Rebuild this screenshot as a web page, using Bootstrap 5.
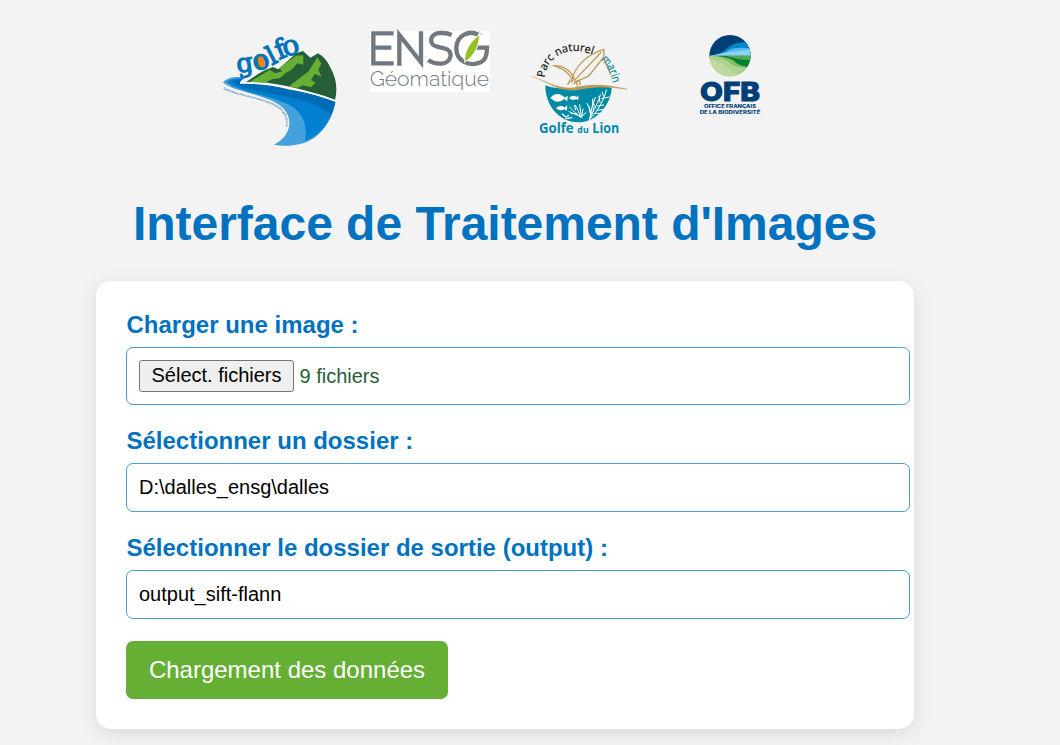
<!DOCTYPE html>
<html lang="fr">
<head>
<meta charset="utf-8">
<meta name="viewport" content="width=device-width, initial-scale=1">
<title>Interface de Traitement d'Images</title>
<link href="https://cdn.jsdelivr.net/npm/bootstrap@5.3.0/dist/css/bootstrap.min.css" rel="stylesheet">
<style>
body{background:#f3f3f3;font-family:"Liberation Sans",Arial,sans-serif;height:745px;overflow:hidden;color:#000}
.logos{padding:20px 0 0 215px;height:155px}
.logos svg{display:block;flex:none;overflow:visible}
.page-title{margin:40px 0 0 133px;height:86px;font-size:48px;line-height:58px;font-weight:700;color:#0072bf;white-space:nowrap;letter-spacing:-.03px}
.panel{margin-left:96px;width:818px;height:448px;border-radius:15px;box-shadow:0 5px 19px rgba(0,0,0,.1);padding:29px 4px 30px 30px}
.form-label{color:#0072bf;font-weight:700;font-size:24px;line-height:30px;margin:0 0 7px;display:block;padding-left:.5px}
.field{border:1px solid #449fd9;border-radius:7px;font-size:20px;line-height:24px;padding:11px 12px 12px;width:784px;height:49px;color:#000;background:#fff}
.field.picker{height:58px;color:#265d38}
.pick{border:1px solid #767676;border-radius:3px;background:#efefef;color:#000;font-size:20px;line-height:28px;width:155px;height:32px;padding:0 0 2px;margin-right:5.5px}
.send{background:#65b034;color:#fff;border:0;border-radius:7px;width:322px;height:58px;font-size:24px;padding:0}
.send:hover{background:#57992c;color:#fff}
</style>
</head>
<body>
<header class="logos d-flex align-items-start">
<svg style="margin:10px 15px 0 0" width="130" height="125" viewBox="0 0 390 375" role="img" aria-label="Golfo">
<path d="M90 158Q116 140 143 124L174 111L190 118L244 70L264 63L286 83L309 70Q331 82 345 110C365 144 368 178 360 211C302 190 242 172 185 163Q134 153 90 158Z" fill="#255e37"/>
<path d="M100 158L165 119L180 130L202 124L192 115L243 77L265 76V104L247 100L230 119L213 128L195 144L171 148L150 158ZM222 169L246 151L281 124L307 82L319 101L310 120L320 140L299 132L288 150L302 158L287 172L263 166L247 174Z" fill="#65b033"/>
<path d="M24 157Q34 143 65 141L94 142Q73 150 75 158Q120 158 205 173Q295 192 361 216C352 271 318 322 267 339C235 348 204 350 176 344C225 321 238 270 205 235C166 193 53 187 24 157Z" fill="#43a1dc"/>
<path d="M34 154Q48 145 85 145Q65 153 76 160C173 160 278 185 361 216C352 270 315 317 270 333C281 277 256 238 211 219C147 192 61 184 34 154Z" fill="#0080ce"/>
<path d="M49 153L90 144Q72 154 77 159C178 160 279 185 361 216Q356 239 348 255C302 209 204 200 132 183Q66 172 49 153Z" fill="#006bb5"/>
<path d="M75 159Q150 156 224 176Q300 189 361 212" fill="none" stroke="#fff" stroke-width="5"/>
<path id="river" d="M25 178C83 204 159 207 197 241Q222 266 207 302" fill="none"/>
<text font-family="Lato,sans-serif" font-size="9.5" fill="#0067ae"><textPath href="#river" textLength="237">Géomatique, observation et mesure pour le littoral du golfe du Lion</textPath></text>
<ellipse cx="138" cy="97" rx="18" ry="20" fill="#f18319"/>
<g font-family="'DejaVu Serif',serif" fill="#0072bc" stroke="#0072bc" stroke-width="3.5" text-anchor="middle">
<text font-size="78" transform="translate(92 125) rotate(-8)">g</text>
<text font-size="84" transform="translate(144 117) rotate(-16)">o</text>
<text font-size="78" transform="translate(181 101) rotate(-27)">l</text>
<text font-size="80" transform="translate(206 84) rotate(-22)">f</text>
<text font-size="84" transform="translate(233 74) rotate(-14)">o</text></g>
</svg>
<svg style="margin-right:25px" width="140" height="80" viewBox="0 0 420 240" role="img" aria-label="ENSG Géomatique">
<path fill="#fff" d="M30 33H390V216H30z"/>
<g fill="none" stroke="#717980" stroke-width="13"><path d="M101 40H40V130H101M40 83H94M118 137V45L183 127V34M275 45Q261 38 243 39C207 38 205 75 231 80L253 85C284 91 274 131 242 131Q221 132 205 120M354 44C329 30 290 45 289 84C288 124 327 141 362 127Q381 119 381 83H346"/></g>
<path d="M314 127C312 96 326 69 359 43C358 75 345 106 314 127Z" fill="#95c11f" stroke="#fff" stroke-width="3"/>
<path d="M357 35l3 2M362 43l5-3" stroke="#9aa2a5" stroke-width="3"/>
<text x="29" y="198" font-family="Raleway,Lato,sans-serif" font-weight="300" font-size="62" fill="#717980" textLength="358" lengthAdjust="spacingAndGlyphs">Géomatique</text>
</svg>
<svg style="margin:15px 55px 0 0" width="110" height="108" viewBox="0 0 330 324" role="img" aria-label="Parc naturel marin Golfe du Lion">
<path d="M61 151Q111 169 174 154Q217 146 260 158C258 206 217 262 160 262C100 262 60 208 61 151Z" fill="#008aa6"/>
<path d="M20 124C70 141 107 166 154 157C207 146 246 149 308 163C256 156 217 153 173 162C106 178 75 142 20 124Z" fill="#bd9b55" stroke="#bd9b55" stroke-width="1"/>
<path d="M83 91C123 102 138 122 143 140M86 92C118 91 145 112 148 137M139 143C146 95 186 58 236 43Q239 57 235 68L190 124Q163 134 145 146M148 137L229 51M235 66L257 119M136 134L128 150M149 140L162 136L166 150M154 139L157 155" fill="none" stroke="#bd9b55" stroke-width="4"/>
<g fill="#fff"><path d="M76 189Q87 174 104 178Q117 183 119 188L128 182L127 199L118 192Q106 203 90 199ZM132 189Q143 177 154 186L160 181V195L153 192Q143 200 132 189ZM93 220Q105 207 119 217L127 211L126 227L118 223Q105 231 93 220Z"/></g>
<g fill="none" stroke="#fff" stroke-width="3" stroke-linecap="round"><path d="M168 247C151 236 144 227 134 216M167 247Q160 224 151 211M169 246L164 209M170 246L174 222M170 246L132 230M169 245L183 233M156 235L139 236M152 225L148 211M192 254C220 229 237 194 244 165M194 252C207 220 222 200 226 179M195 250C197 221 206 201 211 187M198 245L191 212M202 237L186 205M205 230L203 192M213 219L204 203M218 213L236 210M225 202L222 184M229 191L252 186M235 184L232 172M216 226L243 222M210 235L225 235"/><path d="M112 237L122 246L131 241M123 251L140 248" stroke-width="4"/></g>
<path id="parc-arc" d="M59 128C62 72 120 33 184 53Q205 57 220 67" fill="none"/>
<text font-family="'Open Sans',sans-serif" font-size="33" fill="#111" stroke="#111" stroke-width=".6"><textPath href="#parc-arc" textLength="188" lengthAdjust="spacingAndGlyphs">Parc naturel</textPath></text>
<path id="marin-arc" d="M227 75Q257 98 264 152" fill="none"/>
<text font-family="'Open Sans',sans-serif" font-size="35" fill="#008aa6" stroke="#008aa6" stroke-width=".6"><textPath href="#marin-arc" textLength="80" lengthAdjust="spacingAndGlyphs">marin</textPath></text>
<g font-family="'Open Sans',sans-serif" font-weight="700" fill="#008aa6"><text x="42" y="294" font-size="40" textLength="104" lengthAdjust="spacingAndGlyphs">Golfe</text><text x="157" y="294" font-size="25" textLength="34" lengthAdjust="spacingAndGlyphs">du</text><text x="202" y="294" font-size="40" textLength="81" lengthAdjust="spacingAndGlyphs">Lion</text></g>
</svg>
<svg style="margin-top:5px" width="80" height="95" viewBox="0 0 240 285" role="img" aria-label="OFB Office français de la biodiversité">
<defs><clipPath id="globe"><circle cx="120" cy="92" r="62"/></clipPath></defs>
<g clip-path="url(#globe)"><path fill="#003e77" d="M55 25h130v70H55z"/><path d="M58 93Q91 90 112 69Q133 48 185 51V95H58Z" fill="#0086cb"/><path d="M58 93Q98 89 117 75Q137 65 185 70V95Z" fill="#53baf0"/><path d="M58 93H185V73Q110 80 58 93Z" fill="#8dd0f4"/><path d="M58 92H185V155H58Z" fill="#7fbd5d"/><path d="M58 92H185V128Q143 123 130 106Q110 92 58 92Z" fill="#008136"/><path d="M110 93H185V105Q145 105 110 93Z" fill="#55a94e"/><path d="M58 93Q91 91 116 111Q143 134 178 125L165 155H55Z" fill="#add28d"/><path d="M58 102Q91 107 117 132Q131 148 158 149L140 158H55Z" fill="#bed99d"/></g>
<g font-family="Inter,sans-serif" font-weight="800" fill="#003e77"><text x="30" y="227" font-size="78" stroke="#003e77" stroke-width="3" textLength="180" lengthAdjust="spacingAndGlyphs">OFB</text><text x="42" y="248" font-size="13" textLength="156" lengthAdjust="spacingAndGlyphs">OFFICE FRANÇAIS</text><text x="29" y="266" font-size="13" textLength="182" lengthAdjust="spacingAndGlyphs">DE LA BIODIVERSITÉ</text></g>
</svg>
</header>
<main>
<h1 class="page-title">Interface de Traitement d'Images</h1>
<form class="panel bg-white">
<div style="margin-bottom:21px"><label class="form-label" for="files">Charger une image :</label>
<div class="field picker d-flex align-items-center"><button type="button" id="files" class="pick">Sélect. fichiers</button><span>9 fichiers</span></div></div>
<div style="margin-bottom:21px"><label class="form-label" for="folder">Sélectionner un dossier :</label>
<input id="folder" class="field d-block" value="D:\dalles_ensg\dalles"></div>
<div style="margin-bottom:22px"><label class="form-label" for="output">Sélectionner le dossier de sortie (output) :</label>
<input id="output" class="field d-block" value="output_sift-flann"></div>
<button type="button" class="btn send">Chargement des données</button>
</form>
</main>
<script src="https://cdn.jsdelivr.net/npm/bootstrap@5.3.0/dist/js/bootstrap.bundle.min.js"></script>
</body>
</html>
